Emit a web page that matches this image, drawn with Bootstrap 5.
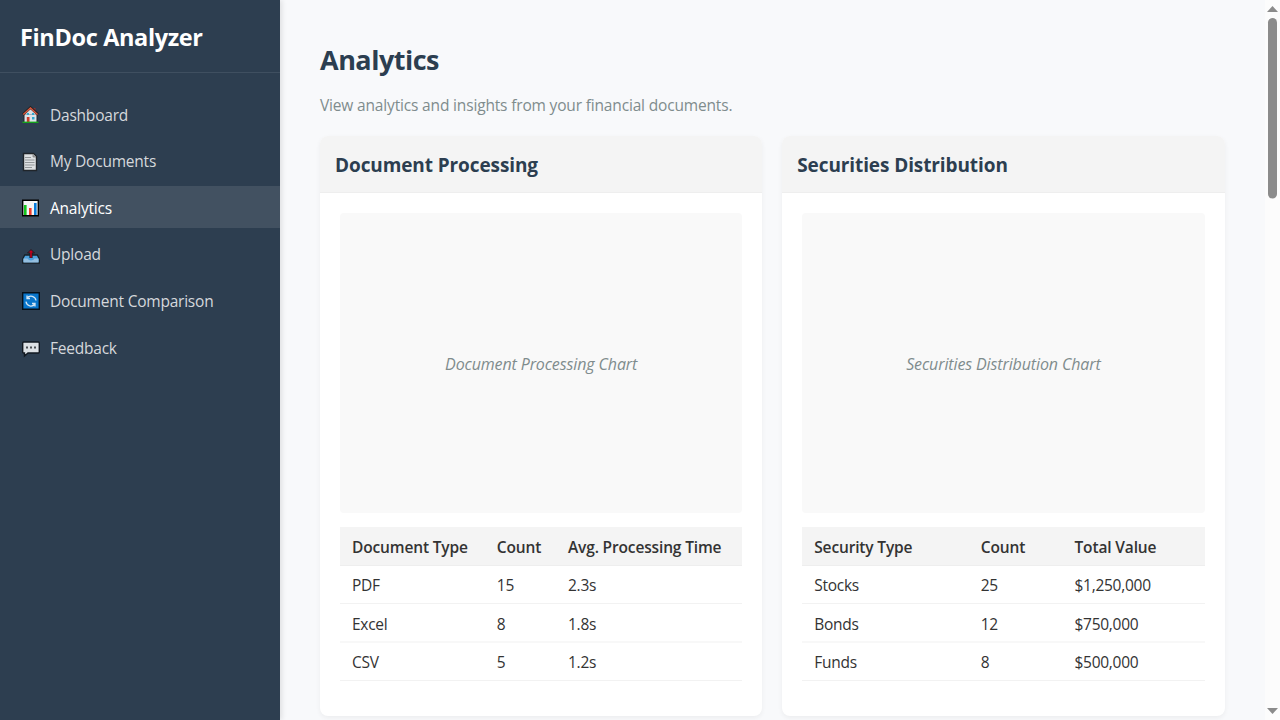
<!DOCTYPE html>
<html lang="en">
<head>
<meta charset="utf-8">
<meta name="viewport" content="width=device-width, initial-scale=1">
<title>FinDoc Analyzer</title>
<link href="https://cdn.jsdelivr.net/npm/bootstrap@5.3.0/dist/css/bootstrap.min.css" rel="stylesheet">
<style>
  body { font-family: "Open Sans", "Noto Sans", sans-serif; font-size: 15.5px; line-height: 24px; color: #333; background: #f8f9fb; height: 720px; }
  .sidebar { width: 280px; background: #2d3e50; box-shadow: 2px 0 5px rgba(0,0,0,.1); z-index: 1; }
  .brand { height: 73px; border-bottom: 1px solid #3f4f60; padding: 2px 20px 0; font-size: 23.5px; font-weight: 700; letter-spacing: -.36px; }
  .side-menu { padding-top: 20px; gap: 5px; }
  .side-menu .nav-link { height: 41.6px; padding: 1.6px 20px 0; gap: 8px; color: #d5d8dc; letter-spacing: -.22px; }
  .side-menu .nav-link.active { background: #425161; color: #fff; }
  .side-menu svg { width: 22px; height: 22px; margin-top: 1px; }
  .page { padding: 40px 40.5px 0 40px; }
  .page h1 { font-size: 27px; line-height: 40px; font-weight: 700; color: #2c3e50; letter-spacing: -.5px; margin: 0 0 13px; }
  .intro { color: #7f8c8d; letter-spacing: -.165px; margin-bottom: 19px; }
  .panels { gap: 20px; }
  .panel { flex: 1 1 0; height: 580px; border: 0; border-radius: 8px; box-shadow: 0 2px 5px rgba(0,0,0,.05); overflow: hidden; }
  .panel .card-header { height: 57px; padding: 3px 15px 0; background: #f4f4f4; border-bottom: 1px solid #eee; }
  .panel h2 { font-size: 19px; font-weight: 700; color: #2c3e50; margin: 0; letter-spacing: -.1px; }
  .panel .card-body { padding: 20px; }
  .chart-box { height: 300px; background: #f9f9f9; border-radius: 4px; color: #7f8c8d; font-size: 16px; letter-spacing: -.12px; font-style: italic; margin-bottom: 14px; padding-top: 1px; }
  .data-table { table-layout: fixed; color: #333; margin: 0; border-collapse: separate; border-spacing: 0; }
  .data-table th, .data-table td { height: 38px; padding: 0 12px; line-height: 20px; vertical-align: middle; border-bottom: 1px solid #f2f2f2; white-space: nowrap; background: #fff; letter-spacing: -.27px; }
  .data-table th { height: 39px; padding-top: 2px; background: #f4f4f4; border-color: #eee; font-weight: 600; letter-spacing: -.15px; }
  .data-table .mid td { height: 39px; padding-top: 2px; border-bottom: 2px solid #f8f8f8; }
  .scroll-rail { width: 15px; background: #fcfcfc; }
</style>
</head>
<body class="d-flex overflow-hidden">
<aside class="sidebar d-flex flex-column flex-shrink-0 text-white">
  <div class="brand d-flex align-items-center">FinDoc Analyzer</div>
  <nav class="side-menu nav flex-column flex-nowrap">
    <a class="nav-link d-flex align-items-center" href="#">
      <svg viewBox="0 0 22 22"><path d="M4 10h13v8.500H4z" fill="#dce3e8" stroke="#20252a"/><path d="M14.500 4v4" stroke="#8d3030" stroke-width="2"/><path d="M3 10.500 10.500 3.500l7.500 7" fill="#d9e0e5" stroke="#222" stroke-width="2.600"/><path d="M3.300 10.500 10.500 4l7 6.500" fill="none" stroke="#dd583d" stroke-width="1.400"/><path d="M7 9h2v2H7zM12 9h2v2h-2zM12 13h2.500v2.500H12z" fill="#32a9cf"/><path d="M6.800 13h2.700v5.500H6.800z" fill="#c83b2c"/><path d="M2.500 17.600h16V19h-16z" fill="#16a51c"/></svg>
      <span>Dashboard</span></a>
    <a class="nav-link d-flex align-items-center" href="#">
      <svg viewBox="0 0 22 22"><path d="M3.500 2.500h10l3 3v14h-13z" fill="#dde0e2" stroke="#20252a" stroke-width="1.400"/><path d="M13 3v3h3" fill="#aaa" stroke="#777" stroke-width=".7"/><path d="M5 6.500h6M5 9h9.500M5 11.500h9.500M5 14h9.500M5 16.500h7" stroke="#929698"/></svg>
      <span>My Documents</span></a>
    <a class="nav-link active d-flex align-items-center" href="#">
      <svg viewBox="0 0 22 22"><path d="M2.700 3.200h15.600v15.600H2.700z" fill="#f5f5f5" stroke="#000" stroke-width="1.400"/><path d="M4 8h2.600v10H4z" fill="#13c51b"/><path d="M9 11h2.600v7H9z" fill="#ee3b2b"/><path d="M14 6h2.600v12H14z" fill="#087ad8"/></svg>
      <span>Analytics</span></a>
    <a class="nav-link d-flex align-items-center" href="#">
      <svg viewBox="0 0 22 22"><path d="m2.700 15 2-4h12.600l2 4v4H2.700z" fill="#4da0dc" stroke="#182027" stroke-width="1.300"/><path d="M3.500 14.500h4q1 2 3.500 2t3.500-2h4v4h-15z" fill="#94bedf"/><path d="M11 14V9" stroke="#182027" stroke-width="3.200"/><path d="M7.500 9 11 5.500 14.500 9z" fill="#c3001e" stroke="#182027"/><path d="M11 13.500V8" stroke="#c3001e" stroke-width="1.600"/></svg>
      <span>Upload</span></a>
    <a class="nav-link d-flex align-items-center" href="#">
      <svg viewBox="0 0 22 22"><path d="M2.700 2.700h16.600v16.600H2.700z" fill="#0875cb" stroke="#06101a" stroke-width="1.400"/><path d="M7 8.200a5 5 0 0 1 9 2.300M15 14a5 5 0 0 1-9-2.300M7 5.500v3h3M15 16.500v-3h-3" fill="none" stroke="#d2e5f4" stroke-width="1.300"/></svg>
      <span>Document Comparison</span></a>
    <a class="nav-link d-flex align-items-center" href="#">
      <svg viewBox="0 0 22 22"><path d="M3.700 5h14.600q1 0 1 1v9q0 1-1 1H8l-3.500 3V16h-.8q-1 0-1-1V6q0-1 1-1z" fill="#dce0e4" stroke="#111820" stroke-width="1.400"/><path d="M6 9.500h2v2H6zM10 9.500h2v2h-2zM14 9.500h2v2h-2z" fill="#4b4f53"/></svg>
      <span>Feedback</span></a>
  </nav>
</aside>
<main class="page flex-grow-1">
  <h1>Analytics</h1>
  <p class="intro">View analytics and insights from your financial documents.</p>
  <div class="panels d-flex">
    <section class="panel card">
      <div class="card-header d-flex align-items-center"><h2>Document Processing</h2></div>
      <div class="card-body">
        <div class="chart-box d-flex align-items-center justify-content-center"><span>Document Processing Chart</span></div>
        <table class="data-table table">
          <colgroup><col style="width:36%"><col style="width:17.700%"><col></colgroup>
          <thead><tr><th>Document Type</th><th>Count</th><th>Avg. Processing Time</th></tr></thead>
          <tbody>
            <tr><td>PDF</td><td>15</td><td>2.3s</td></tr>
            <tr class="mid"><td>Excel</td><td>8</td><td>1.8s</td></tr>
            <tr><td>CSV</td><td>5</td><td>1.2s</td></tr>
          </tbody>
        </table>
      </div>
    </section>
    <section class="panel card">
      <div class="card-header d-flex align-items-center"><h2>Securities Distribution</h2></div>
      <div class="card-body">
        <div class="chart-box d-flex align-items-center justify-content-center"><span>Securities Distribution Chart</span></div>
        <table class="data-table table">
          <colgroup><col style="width:41.400%"><col style="width:23.300%"><col></colgroup>
          <thead><tr><th>Security Type</th><th>Count</th><th>Total Value</th></tr></thead>
          <tbody>
            <tr><td>Stocks</td><td>25</td><td>$1,250,000</td></tr>
            <tr class="mid"><td>Bonds</td><td>12</td><td>$750,000</td></tr>
            <tr><td>Funds</td><td>8</td><td>$500,000</td></tr>
          </tbody>
        </table>
      </div>
    </section>
  </div>
</main>
<div class="scroll-rail flex-shrink-0" aria-hidden="true">
  <svg class="d-block" width="15" height="720" viewBox="0 0 15 720" fill="#8b8b8b"><path d="M2 12 7.500 6 13 12z"/><rect x="3" y="18" width="9" height="180.500" rx="4.500"/><path d="M2 708h11l-5.500 6z"/></svg>
</div>
<script src="https://cdn.jsdelivr.net/npm/bootstrap@5.3.0/dist/js/bootstrap.bundle.min.js"></script>
</body>
</html>
